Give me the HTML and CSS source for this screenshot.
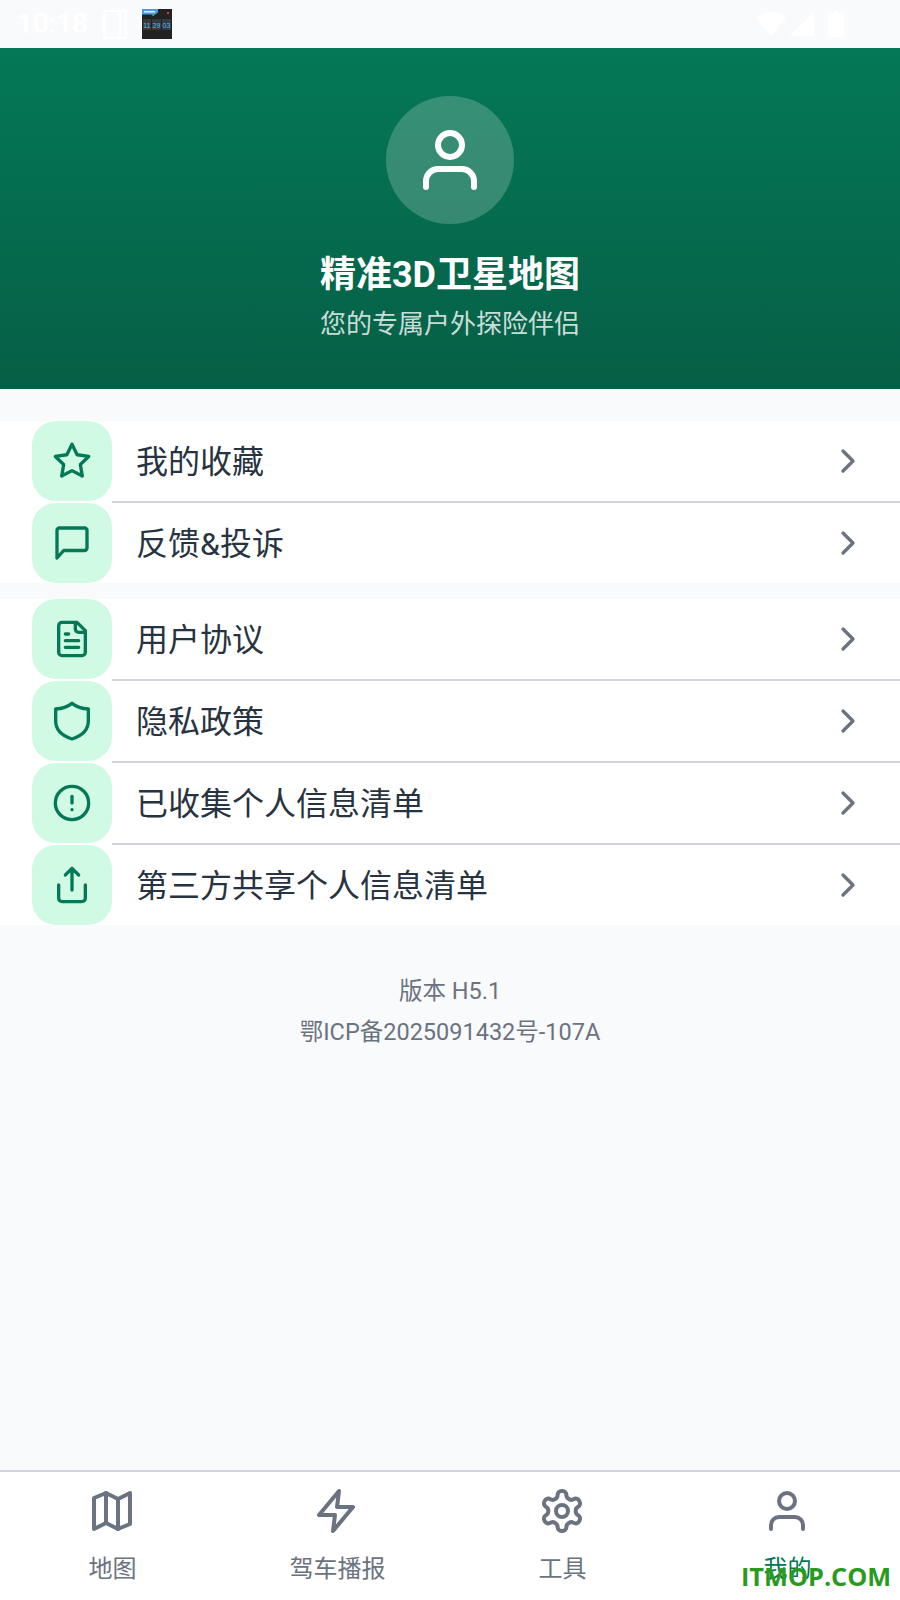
FILE: index.html
```html
<!DOCTYPE html>
<html lang="zh-CN">
<head>
    <meta charset="utf-8">
    <title>我的</title>
    <meta name="viewport" content="width=device-width, initial-scale=1">
    <link rel="stylesheet" href="styles.css">
</head>

<body>
    <div class="status-bar">
        <span class="status-time">10:18</span>
        <svg class="status-note" viewBox="0 0 26 29" fill="none" stroke="currentColor" stroke-width="2">
            <rect x="3" y="1" width="22" height="27" rx="1"/>
            <path d="M19 1v27M1 6h4M1 11h4M1 16h4M1 21h4"/>
        </svg>
        <svg class="status-thumb" viewBox="0 0 30 30">
            <rect width="30" height="30" fill="#222"/>
            <path d="M0 0h16v3.500l-3 2H0z" fill="#4a9be8"/>
            <path d="M2 2h11v1.500H2z" fill="#dcefff"/>
            <path d="M9 5.500h4l-1.500 1.500z" fill="#6fce5a"/>
            <rect x="25" y="3" width="2" height="2" fill="#e03a2f"/>
            <rect x="1" y="10" width="8" height="11" fill="#363a40"/>
            <rect x="10" y="10" width="9" height="11" fill="#363a40"/>
            <rect x="20" y="10" width="9" height="11" fill="#363a40"/>
            <text class="thumb-digits" x="1.200" y="18.500">11</text>
            <text class="thumb-digits" x="10.600" y="18.500">29</text>
            <text class="thumb-digits" x="20.600" y="18.500">03</text>
        </svg>
        <div class="status-right">
            <svg class="status-wifi" viewBox="0 0 30 24"><path d="M0 6Q15-6 30 6L15 24z" fill="currentColor"/></svg>
            <svg class="status-signal" viewBox="0 0 25 24"><path d="M25 0v24H0z" fill="currentColor"/></svg>
            <svg class="status-battery" viewBox="0 0 16 26"><path d="M5 0h6v2h4a1 1 0 0 1 1 1v22a1 1 0 0 1-1 1H1a1 1 0 0 1-1-1V3a1 1 0 0 1 1-1h4z" fill="currentColor"/></svg>
        </div>
    </div>

    <header class="hero">
        <div class="avatar">
            <svg class="avatar-icon" viewBox="0 0 24 24">
                <circle cx="12" cy="7" r="4"/>
                <path d="M4 21v-2a4 4 0 0 1 4-4h8a4 4 0 0 1 4 4v2"/>
            </svg>
        </div>
        <h1 class="hero-title">精准3D卫星地图</h1>
        <p class="hero-sub">您的专属户外探险伴侣</p>
    </header>

    <main class="content">
        <section class="menu">
            <a class="menu-row" href="#">
                <span class="tile">
                    <svg class="tile-icon" viewBox="0 0 24 24"><path d="M12 2l3.090 6.260L22 9.270l-5 4.870 1.180 6.880L12 17.770l-6.180 3.250L7 14.140 2 9.270l6.910-1.010z"/></svg>
                </span>
                <span class="row-body">
                    <span class="row-label">我的收藏</span>
                    <svg class="chevron" viewBox="0 0 24 24"><path d="M9 18l6-6-6-6"/></svg>
                </span>
            </a>
            <a class="menu-row" href="#">
                <span class="tile">
                    <svg class="tile-icon" viewBox="0 0 24 24"><path d="M21 15a1.500 1.500 0 0 1-1.500 1.500H7L3 21V4.500A1.500 1.500 0 0 1 4.500 3h15A1.500 1.500 0 0 1 21 4.500z"/></svg>
                </span>
                <span class="row-body">
                    <span class="row-label">反馈&amp;投诉</span>
                    <svg class="chevron" viewBox="0 0 24 24"><path d="M9 18l6-6-6-6"/></svg>
                </span>
            </a>
        </section>

        <section class="menu">
            <a class="menu-row" href="#">
                <span class="tile">
                    <svg class="tile-icon" viewBox="0 0 24 24"><path d="M15 2H6a2 2 0 0 0-2 2v16a2 2 0 0 0 2 2h12a2 2 0 0 0 2-2V7z"/><path d="M14 2v4a2 2 0 0 0 2 2h4M10 9H8M16 13H8M16 17H8"/></svg>
                </span>
                <span class="row-body">
                    <span class="row-label">用户协议</span>
                    <svg class="chevron" viewBox="0 0 24 24"><path d="M9 18l6-6-6-6"/></svg>
                </span>
            </a>
            <a class="menu-row" href="#">
                <span class="tile">
                    <svg class="tile-icon" viewBox="0 0 24 24"><path d="M12 1.400c2.800 2.200 6 3.200 9.800 3.400V12c0 5.500-3.900 8.900-9.800 10.800C6.100 20.900 2.200 17.500 2.200 12V4.800C6 4.600 9.200 3.600 12 1.400z"/></svg>
                </span>
                <span class="row-body">
                    <span class="row-label">隐私政策</span>
                    <svg class="chevron" viewBox="0 0 24 24"><path d="M9 18l6-6-6-6"/></svg>
                </span>
            </a>
            <a class="menu-row" href="#">
                <span class="tile">
                    <svg class="tile-icon" viewBox="0 0 24 24"><circle cx="12" cy="12" r="10"/><path d="M12 8v4M12 16h.01"/></svg>
                </span>
                <span class="row-body">
                    <span class="row-label">已收集个人信息清单</span>
                    <svg class="chevron" viewBox="0 0 24 24"><path d="M9 18l6-6-6-6"/></svg>
                </span>
            </a>
            <a class="menu-row" href="#">
                <span class="tile">
                    <svg class="tile-icon" viewBox="0 0 24 24"><path d="M4 12v8a2 2 0 0 0 2 2h12a2 2 0 0 0 2-2v-8M16 6l-4-4-4 4M12 2v13"/></svg>
                </span>
                <span class="row-body">
                    <span class="row-label">第三方共享个人信息清单</span>
                    <svg class="chevron" viewBox="0 0 24 24"><path d="M9 18l6-6-6-6"/></svg>
                </span>
            </a>
        </section>

        <footer class="about">
            <p>版本 H5.1</p>
            <p>鄂ICP备2025091432号-107A</p>
        </footer>
    </main>

    <nav class="tabbar">
        <a class="tab" href="#">
            <svg class="tab-icon" viewBox="0 0 24 24"><path d="M9 3L3 5.500V21l6-3 6 3 6-2.500V3l-6 3z"/><path d="M9 3v15M15 6v15"/></svg>
            <span>地图</span>
        </a>
        <a class="tab" href="#">
            <svg class="tab-icon" viewBox="0 0 24 24"><path d="M13 2L3 14h8l-1 8 10-12h-8z"/></svg>
            <span>驾车播报</span>
        </a>
        <a class="tab" href="#">
            <svg class="tab-icon" viewBox="0 0 24 24"><path d="M12.220 2h-.44a2 2 0 0 0-2 2v.18a2 2 0 0 1-1 1.730l-.43.25a2 2 0 0 1-2 0l-.15-.08a2 2 0 0 0-2.730.73l-.22.38a2 2 0 0 0 .73 2.730l.15.1a2 2 0 0 1 1 1.720v.51a2 2 0 0 1-1 1.740l-.15.09a2 2 0 0 0-.73 2.730l.22.38a2 2 0 0 0 2.730.73l.15-.08a2 2 0 0 1 2 0l.43.25a2 2 0 0 1 1 1.730V20a2 2 0 0 0 2 2h.44a2 2 0 0 0 2-2v-.18a2 2 0 0 1 1-1.730l.43-.25a2 2 0 0 1 2 0l.15.08a2 2 0 0 0 2.730-.73l.22-.39a2 2 0 0 0-.73-2.730l-.15-.08a2 2 0 0 1-1-1.740v-.5a2 2 0 0 1 1-1.740l.15-.09a2 2 0 0 0 .73-2.730l-.22-.38a2 2 0 0 0-2.730-.73l-.15.08a2 2 0 0 1-2 0l-.43-.25a2 2 0 0 1-1-1.730V4a2 2 0 0 0-2-2z"/><circle cx="12" cy="12" r="3"/></svg>
            <span>工具</span>
        </a>
        <a class="tab tab-active" href="#">
            <svg class="tab-icon" viewBox="0 0 24 24"><circle cx="12" cy="7" r="4"/><path d="M4 21v-2a4 4 0 0 1 4-4h8a4 4 0 0 1 4 4v2"/></svg>
            <span>我的</span>
        </a>
        <span class="watermark">ITMOP.COM</span>
    </nav>
</body>
</html>
```

FILE: styles.css
```css
* {
    box-sizing: border-box;
}
html, body {
    margin: 0;
    padding: 0;
}
body {
    width: 900px;
    height: 1600px;
    display: flex;
    flex-direction: column;
    background-color: #f9fafb;
    font-family: Roboto, "Noto Sans CJK SC", sans-serif;
    overflow: hidden;
}
a {
    text-decoration: none;
    color: inherit;
}

/* status bar */
.status-bar {
    height: 48px;
    flex: none;
    display: flex;
    align-items: center;
    padding: 0 0 0 17px;
    color: #fff;
}
.status-time {
    font-size: 28px;
    font-weight: 500;
    line-height: 48px;
    width: 84px;
}
.status-note {
    width: 26px;
    height: 29px;
    margin-right: 15px;
}
.status-thumb {
    width: 30px;
    height: 30px;
}
.thumb-digits {
    font-family: "Liberation Sans", sans-serif;
    font-size: 7px;
    fill: #4fc0ff;
}
.status-right {
    margin-left: auto;
    display: flex;
    align-items: center;
    padding-right: 56px;
}
.status-wifi {
    width: 30px;
    height: 24px;
    margin-right: 3px;
}
.status-signal {
    width: 25px;
    height: 24px;
    margin-right: 14px;
}
.status-battery {
    width: 16px;
    height: 26px;
}

/* header */
.hero {
    height: 341px;
    flex: none;
    display: flex;
    flex-direction: column;
    align-items: center;
    padding-top: 48px;
    background: linear-gradient(180deg, #047857, #065f46);
    color: #fff;
}
.avatar {
    width: 128px;
    height: 128px;
    border-radius: 50%;
    background-color: rgba(255, 255, 255, 0.2);
    display: flex;
    align-items: center;
    justify-content: center;
}
.avatar-icon {
    width: 72px;
    height: 72px;
    fill: none;
    stroke: #fff;
    stroke-width: 2;
    stroke-linecap: round;
    stroke-linejoin: round;
}
.hero-title {
    margin: 29px 0 0;
    font-size: 36px;
    line-height: 44px;
    font-weight: 700;
}
.hero-sub {
    margin: 9px 0 0;
    font-size: 26px;
    line-height: 36px;
    color: rgba(255, 255, 255, 0.8);
}

/* menu */
.content {
    flex: 1;
    padding-top: 32px;
}
.menu {
    background-color: #fff;
    margin-bottom: 16px;
}
.menu-row {
    display: flex;
    padding-left: 32px;
}
.tile {
    width: 80px;
    height: 80px;
    flex: none;
    border-radius: 24px;
    background-color: #d1fae5;
    display: flex;
    align-items: center;
    justify-content: center;
}
.tile-icon {
    width: 40px;
    height: 40px;
    fill: none;
    stroke: #047857;
    stroke-width: 2;
    stroke-linecap: round;
    stroke-linejoin: round;
}
.row-body {
    flex: 1;
    height: 82px;
    display: flex;
    align-items: center;
    justify-content: space-between;
    padding: 0 32px 0 24px;
    border-bottom: 2px solid #d1d5db;
}
.menu-row:last-child .row-body {
    height: 80px;
    border-bottom: none;
}
.row-label {
    padding-bottom: 4px;
    font-size: 32px;
    color: #283341;
}
.chevron {
    width: 40px;
    height: 40px;
    fill: none;
    stroke: #6b7280;
    stroke-width: 2;
    stroke-linecap: round;
    stroke-linejoin: round;
}

/* version text */
.about {
    padding-top: 30px;
    text-align: center;
    font-size: 23.500px;
    line-height: 41px;
    color: #6b7280;
}
.about p {
    margin: 0;
}

/* tab bar */
.tabbar {
    position: relative;
    height: 130px;
    flex: none;
    display: grid;
    grid-template-columns: repeat(4, 1fr);
    border-top: 2px solid #d1d5db;
    background-color: #fff;
}
.tab {
    display: flex;
    flex-direction: column;
    align-items: center;
    padding-top: 15px;
    font-size: 24px;
    line-height: 32px;
    color: #6b7280;
}
.tab span {
    margin-top: 18px;
}
.tab-icon {
    width: 48px;
    height: 48px;
    margin-right: 2px;
    fill: none;
    stroke: #6b7280;
    stroke-width: 2;
    stroke-linecap: round;
    stroke-linejoin: round;
}
.tab-active {
    color: #047857;
}
.watermark {
    position: absolute;
    left: 741px;
    top: 87px;
    font-family: "Open Sans", sans-serif;
    font-size: 25.300px;
    line-height: 34px;
    font-weight: 700;
    color: #2a9a1f;
}
```
